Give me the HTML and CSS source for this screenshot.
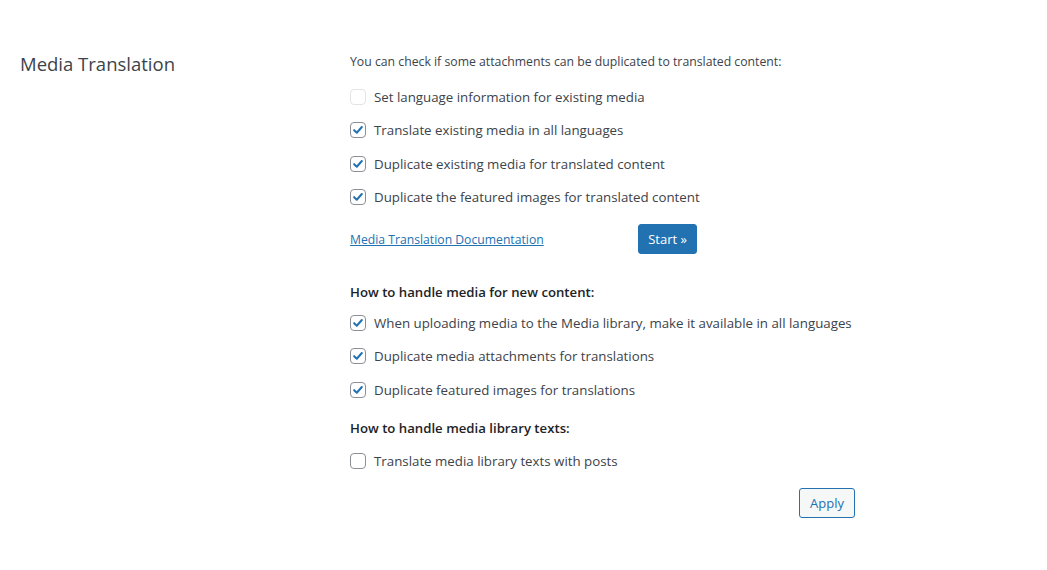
FILE: index.html
```html
<!DOCTYPE html>
<html>
<head>
<meta charset="utf-8">
<link rel="stylesheet" href="styles.css">
</head>
<body>
<div class="section">
  <div class="section-title">Media Translation</div>
  <div class="section-body">
    <p class="intro">You can check if some attachments can be duplicated to translated content:</p>
    <div class="opt"><span class="cb cb-disabled"></span><span>Set language information for existing media</span></div>
    <div class="opt"><span class="cb"><svg viewBox="0 0 16 16" width="16" height="16"><path d="M3.6 8.2 L6.6 11.1 L12.4 4.6" fill="none" stroke="#2271b1" stroke-width="2.3" stroke-linecap="round" stroke-linejoin="round"/></svg></span><span>Translate existing media in all languages</span></div>
    <div class="opt"><span class="cb"><svg viewBox="0 0 16 16" width="16" height="16"><path d="M3.6 8.2 L6.6 11.1 L12.4 4.6" fill="none" stroke="#2271b1" stroke-width="2.3" stroke-linecap="round" stroke-linejoin="round"/></svg></span><span>Duplicate existing media for translated content</span></div>
    <div class="opt"><span class="cb"><svg viewBox="0 0 16 16" width="16" height="16"><path d="M3.6 8.2 L6.6 11.1 L12.4 4.6" fill="none" stroke="#2271b1" stroke-width="2.3" stroke-linecap="round" stroke-linejoin="round"/></svg></span><span>Duplicate the featured images for translated content</span></div>
    <div class="actions">
      <a class="doc-link" href="#">Media Translation Documentation</a>
      <button class="btn-primary">Start »</button>
    </div>
    <h4 class="sub">How to handle media for new content:</h4>
    <div class="opt"><span class="cb"><svg viewBox="0 0 16 16" width="16" height="16"><path d="M3.6 8.2 L6.6 11.1 L12.4 4.6" fill="none" stroke="#2271b1" stroke-width="2.3" stroke-linecap="round" stroke-linejoin="round"/></svg></span><span>When uploading media to the Media library, make it available in all languages</span></div>
    <div class="opt"><span class="cb"><svg viewBox="0 0 16 16" width="16" height="16"><path d="M3.6 8.2 L6.6 11.1 L12.4 4.6" fill="none" stroke="#2271b1" stroke-width="2.3" stroke-linecap="round" stroke-linejoin="round"/></svg></span><span>Duplicate media attachments for translations</span></div>
    <div class="opt"><span class="cb"><svg viewBox="0 0 16 16" width="16" height="16"><path d="M3.6 8.2 L6.6 11.1 L12.4 4.6" fill="none" stroke="#2271b1" stroke-width="2.3" stroke-linecap="round" stroke-linejoin="round"/></svg></span><span>Duplicate featured images for translations</span></div>
    <h4 class="sub sub2">How to handle media library texts:</h4>
    <div class="opt"><span class="cb"></span><span>Translate media library texts with posts</span></div>
    <div class="apply-row"><button class="btn-secondary">Apply</button></div>
  </div>
</div>
</body>
</html>
```
FILE: styles.css
```css
html, body {
  margin: 0;
  padding: 0;
  background: #ffffff;
}
body {
  font-family: "Open Sans", "Noto Sans", sans-serif;
  color: #3c434a;
  font-size: 13px;
}
.section {
  display: flex;
  padding: 50px 0 0 20px;
}
.section-title {
  width: 330px;
  flex: none;
  font-size: 18.5px;
  color: #3c434a;
  line-height: 28px;
}
.section-body {
  width: 505px;
}
.intro {
  margin: 3px 0 9px;
  font-size: 12.25px;
  line-height: 18px;
  white-space: nowrap;
}
.opt {
  display: flex;
  align-items: center;
  gap: 8px;
  height: 33.5px;
  font-size: 13.3px;
  white-space: nowrap;
}
.cb {
  width: 14px;
  height: 14px;
  border: 1px solid #8c8f94;
  border-radius: 4px;
  display: inline-flex;
  align-items: center;
  justify-content: center;
  flex: none;
  background: #fff;
}
.cb svg {
  display: block;
}
.cb-disabled {
  border-color: #e2e4e7;
}
.actions {
  display: flex;
  align-items: center;
  justify-content: space-between;
  width: 347px;
  margin-top: 10px;
}
.doc-link {
  color: #2271b1;
  text-decoration: underline;
  font-size: 12.2px;
}
.btn-primary {
  font-family: inherit;
  background: #2271b1;
  color: #fff;
  border: 1px solid #2271b1;
  border-radius: 3px;
  font-size: 13px;
  height: 30px;
  padding: 0 9px;
}
.sub {
  margin: 28px 0 4px;
  font-size: 13.2px;
  font-weight: 600;
  color: #1d2327;
  line-height: 20px;
}
.sub2 {
  margin-top: 11px;
  margin-bottom: 7px;
}
.apply-row {
  display: flex;
  justify-content: flex-end;
  margin-top: 10px;
}
.btn-secondary {
  font-family: inherit;
  background: #f6f7f7;
  color: #2271b1;
  border: 1px solid #2271b1;
  border-radius: 3px;
  font-size: 13px;
  height: 30px;
  padding: 0 10px;
}
```
